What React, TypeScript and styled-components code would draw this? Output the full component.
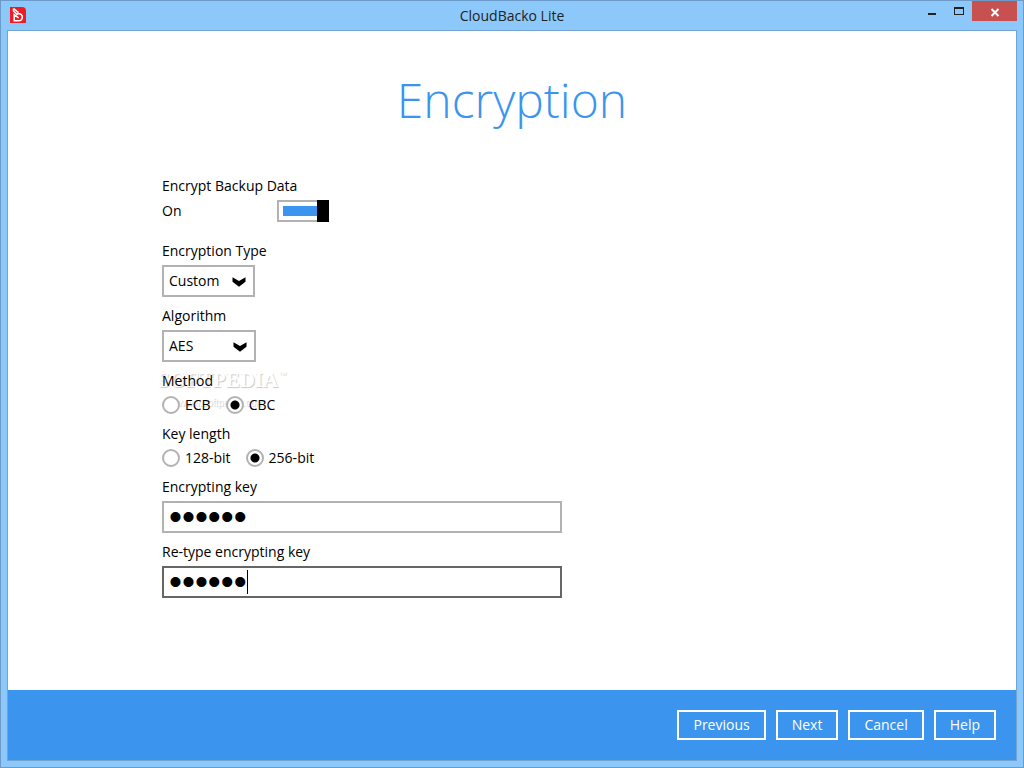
import React from "react";
import styled, { createGlobalStyle } from "styled-components";

const Global = createGlobalStyle`
  *, *::before, *::after { box-sizing: border-box; }
  body { margin: 0; color: #000; font: 14px/20px "Open Sans", "Noto Sans", sans-serif; }
  button, input, select { font: inherit; color: inherit; }
`;

const Frame = styled.div`
  min-height: 100vh;
  display: flex;
  flex-direction: column;
  background: #8dc8fb;
  border: 1px solid #6d9bc9;
  padding: 0 6px 6px;
`;

const TitleBar = styled.header`
  height: 29px;
  display: grid;
  grid-template-columns: 1fr auto 1fr;
  align-items: start;
`;

const AppIcon = styled.svg`
  width: 16px;
  height: 16px;
  margin: 6px 3px;
`;

const WindowTitle = styled.div`
  color: #222;
  line-height: 30px;
`;

const WindowControls = styled.div`
  display: flex;
  justify-content: flex-end;
`;

const WindowButton = styled.button<{ $close?: boolean }>`
  width: ${(p) => (p.$close ? 45 : 27)}px;
  height: 20px;
  padding: 0;
  border: 0;
  background: ${(p) => (p.$close ? "#c75050" : "transparent")};
  svg { display: block; margin: 0 auto; }
`;

const Content = styled.div`
  flex: 1;
  display: flex;
  flex-direction: column;
  background: #fff;
  border: 1px solid #74a4d2;
`;

const Main = styled.main`
  flex: 1;
  padding: 34px 20px 40px;
`;

const Heading = styled.h1`
  margin: 0 0 41px;
  text-align: center;
  font-size: 48px;
  line-height: 70px;
  font-weight: 300;
  color: #3b95ee;
`;

const Form = styled.form`
  max-width: 700px;
  margin: 0 auto;
  display: flex;
  flex-direction: column;
  gap: 9px;
`;

const Field = styled.fieldset`
  min-width: 0;
  margin: 0;
  padding: 0;
  border: 0;
  position: relative;
  isolation: isolate;
`;

const Label = styled.label`
  display: block;
  margin-bottom: 4px;
`;

const Legend = styled.legend`
  padding: 0;
  margin-bottom: 4px;
`;

const SwitchRow = styled.div`
  width: 167px;
  height: 22px;
  margin-bottom: 10px;
  display: flex;
  justify-content: space-between;
  align-items: center;
  font-weight: 500;
`;

const Switch = styled.input`
  appearance: none;
  width: 52px;
  height: 22px;
  margin: 0;
  padding: 4px;
  border: 2px solid #b2b2b2;
  background: #3b95ee content-box;
  &:checked {
    border-right: 12px solid #000;
    border-image: linear-gradient(to right, #b2b2b2 40px, #000 40px) 2 12 2 2;
    padding-right: 0;
  }
`;

const SelectBox = styled.div<{ $wide?: boolean }>`
  position: relative;
  width: ${(p) => (p.$wide ? 94 : 93)}px;
  svg {
    position: absolute;
    right: 9px;
    top: 12px;
    pointer-events: none;
  }
`;

const Select = styled.select`
  appearance: none;
  display: block;
  width: 100%;
  height: 32px;
  padding: 0 24px 0 5px;
  border: 2px solid #b2b2b2;
  border-radius: 0;
  background: #fff;
`;

const Radios = styled.div`
  display: flex;
  gap: 15px;
`;

const RadioLabel = styled.label`
  display: flex;
  align-items: center;
  gap: 5px;
`;

const Radio = styled.input`
  appearance: none;
  width: 18px;
  height: 18px;
  margin: 0;
  border: 2px solid #b2b2b2;
  border-radius: 50%;
  background: #fff;
  &:checked { background: radial-gradient(circle, #000 4px, #fff 5px); }
`;

const KeyBox = styled.div`
  position: relative;
  max-width: 400px;
`;

const KeyInput = styled.input<{ $active?: boolean }>`
  display: block;
  width: 100%;
  height: 32px;
  padding: 0 5px;
  border: 2px solid ${(p) => (p.$active ? "#666" : "#b2b2b2")};
  border-radius: 0;
  background: #fff;
  outline: 0;
  font: 37px "Liberation Sans", sans-serif;
`;

const Caret = styled.span`
  position: absolute;
  left: 85px;
  top: 4px;
  width: 1px;
  height: 24px;
  background: #000;
`;

const Watermark = styled.div`
  position: absolute;
  z-index: -1;
  left: -4px;
  top: -28px;
  pointer-events: none;
  color: #fff;
  text-shadow: 1px 1px 1px rgba(0, 0, 0, 0.22);
  font: bold 21px/26px "Liberation Serif", serif;
  white-space: nowrap;
  sup { font: 8px/8px "Liberation Sans", sans-serif; vertical-align: 10px; }
  small { display: block; font: 10px/20px "Liberation Sans", sans-serif; padding-left: 20px; }
`;

const Footer = styled.footer`
  min-height: 70px;
  padding: 20px;
  display: flex;
  justify-content: flex-end;
  gap: 10px;
  background: #3b95ee;
`;

const FooterButton = styled.button`
  height: 30px;
  padding: 0 14px;
  border: 2px solid #fff;
  background: transparent;
  color: #fff;
  font-weight: 500;
`;

const Chevron = () => (
  <svg width="14" height="10" viewBox="0 0 14 10" aria-hidden="true">
    <path d="M0.5 0.2L7 4L13.5 0.2V4.8L7 9.8L0.5 4.8Z" />
  </svg>
);

export default function App() {
  return (
    <>
      <Global />
      <Frame>
        <TitleBar>
          <AppIcon viewBox="0 0 16 16" aria-hidden="true">
            <path d="M0 0H12Q16 0 16 4V16H0Z" fill="#ed1c24" />
            <path d="M3.5 1.5L8 5.2L7.4 6.4Q12.4 6.6 12.4 10Q12.2 13.8 8.5 13.8H4.2V7.6L8.6 10.8M3.5 1.5V4L7.5 8" fill="none" stroke="#fff" strokeWidth="1.5" />
          </AppIcon>
          <WindowTitle>CloudBacko Lite</WindowTitle>
          <WindowControls>
            <WindowButton aria-label="Minimize">
              <svg width="27" height="20"><path d="M10 12h8v2h-8z" fill="#222" /></svg>
            </WindowButton>
            <WindowButton aria-label="Maximize">
              <svg width="27" height="20"><path d="M9 6h10v8H9zM10 8v5h8V8z" fill="#222" fillRule="evenodd" /></svg>
            </WindowButton>
            <WindowButton $close aria-label="Close">
              <svg width="45" height="20"><path d="M19.5 8l7 7M26.5 8l-7 7" stroke="#fff" strokeWidth="2" /></svg>
            </WindowButton>
          </WindowControls>
        </TitleBar>
        <Content>
          <Main>
            <Heading>Encryption</Heading>
            <Form>
              <Field>
                <Label htmlFor="encrypt">Encrypt Backup Data</Label>
                <SwitchRow>
                  <span>On</span>
                  <Switch id="encrypt" type="checkbox" role="switch" defaultChecked />
                </SwitchRow>
              </Field>
              <Field>
                <Label htmlFor="type">Encryption Type</Label>
                <SelectBox>
                  <Select id="type"><option>Custom</option></Select>
                  <Chevron />
                </SelectBox>
              </Field>
              <Field>
                <Label htmlFor="algorithm">Algorithm</Label>
                <SelectBox $wide>
                  <Select id="algorithm"><option>AES</option></Select>
                  <Chevron />
                </SelectBox>
              </Field>
              <Field>
                <Legend>Method</Legend>
                <Radios>
                  <RadioLabel><Radio type="radio" name="method" />ECB</RadioLabel>
                  <RadioLabel><Radio type="radio" name="method" defaultChecked />CBC</RadioLabel>
                </Radios>
                <Watermark aria-hidden="true">SOFTPEDIA<sup>™</sup><small>www.softpedia.com</small></Watermark>
              </Field>
              <Field>
                <Legend>Key length</Legend>
                <Radios>
                  <RadioLabel><Radio type="radio" name="length" />128-bit</RadioLabel>
                  <RadioLabel><Radio type="radio" name="length" defaultChecked />256-bit</RadioLabel>
                </Radios>
              </Field>
              <Field>
                <Label htmlFor="key">Encrypting key</Label>
                <KeyBox>
                  <KeyInput id="key" type="password" defaultValue="secret" />
                </KeyBox>
              </Field>
              <Field>
                <Label htmlFor="rekey">Re-type encrypting key</Label>
                <KeyBox>
                  <KeyInput id="rekey" type="password" defaultValue="secret" $active />
                  <Caret />
                </KeyBox>
              </Field>
            </Form>
          </Main>
          <Footer>
            <FooterButton>Previous</FooterButton>
            <FooterButton>Next</FooterButton>
            <FooterButton>Cancel</FooterButton>
            <FooterButton>Help</FooterButton>
          </Footer>
        </Content>
      </Frame>
    </>
  );
}
